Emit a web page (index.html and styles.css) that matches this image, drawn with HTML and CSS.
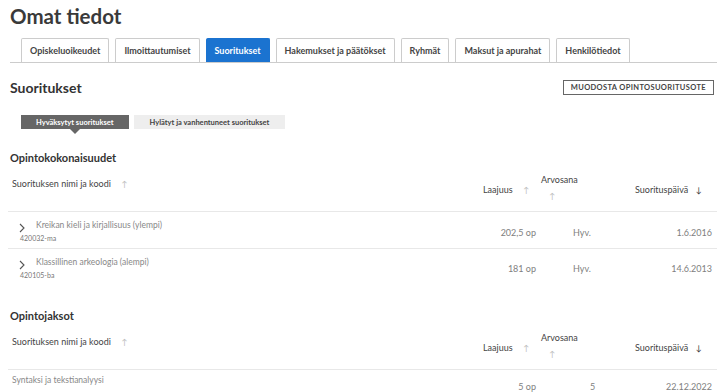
FILE: index.html
```html
<!DOCTYPE html>
<html lang="fi">
<head>
    <meta charset="UTF-8">
    <meta name="viewport" content="width=device-width, initial-scale=1.0">
    <title>Omat tiedot</title>
    <link rel="stylesheet" href="styles.css">
</head>
<body>
    <div class="page">
        <h1 class="page-title">Omat tiedot</h1>

        <nav class="tabs">
            <a href="#" class="tab">Opiskeluoikeudet</a>
            <a href="#" class="tab">Ilmoittautumiset</a>
            <a href="#" class="tab tab-active">Suoritukset</a>
            <a href="#" class="tab">Hakemukset ja päätökset</a>
            <a href="#" class="tab">Ryhmät</a>
            <a href="#" class="tab">Maksut ja apurahat</a>
            <a href="#" class="tab">Henkilötiedot</a>
        </nav>

        <div class="section-head">
            <h2>Suoritukset</h2>
            <button class="btn-outline">Muodosta opintosuoritusote</button>
        </div>

        <div class="toggle">
            <button class="toggle-btn toggle-active">Hyväksytyt suoritukset</button>
            <button class="toggle-btn">Hylätyt ja vanhentuneet suoritukset</button>
        </div>

        <!-- Opintokokonaisuudet -->
        <h3 class="group-title">Opintokokonaisuudet</h3>
        <div class="results">
            <div class="results-head">
                <div class="col-name">Suorituksen nimi ja koodi <span class="sort">↑</span></div>
                <div class="col-credits">Laajuus <span class="sort">↑</span></div>
                <div class="col-grade">Arvosana<br><span class="sort">↑</span></div>
                <div class="col-date">Suorituspäivä <span class="sort sort-on">↓</span></div>
            </div>
            <div class="results-row">
                <div class="col-name">
                    <span class="chevron">
                        <svg width="8" height="10" viewBox="0 0 8 10"><path d="M2 1 L6 5 L2 9" fill="none" stroke="#555" stroke-width="1.1"/></svg>
                    </span>
                    <div>
                        <div class="course-name">Kreikan kieli ja kirjallisuus (ylempi)</div>
                        <div class="course-code">420032-ma</div>
                    </div>
                </div>
                <div class="col-credits">202,5 op</div>
                <div class="col-grade">Hyv.</div>
                <div class="col-date">1.6.2016</div>
            </div>
            <div class="results-row">
                <div class="col-name">
                    <span class="chevron">
                        <svg width="8" height="10" viewBox="0 0 8 10"><path d="M2 1 L6 5 L2 9" fill="none" stroke="#555" stroke-width="1.1"/></svg>
                    </span>
                    <div>
                        <div class="course-name">Klassillinen arkeologia (alempi)</div>
                        <div class="course-code">420105-ba</div>
                    </div>
                </div>
                <div class="col-credits">181 op</div>
                <div class="col-grade">Hyv.</div>
                <div class="col-date">14.6.2013</div>
            </div>
        </div>

        <!-- Opintojaksot -->
        <h3 class="group-title group-second">Opintojaksot</h3>
        <div class="results">
            <div class="results-head">
                <div class="col-name">Suorituksen nimi ja koodi <span class="sort">↑</span></div>
                <div class="col-credits">Laajuus <span class="sort">↑</span></div>
                <div class="col-grade">Arvosana<br><span class="sort">↑</span></div>
                <div class="col-date">Suorituspäivä <span class="sort sort-on">↓</span></div>
            </div>
            <div class="results-row row-plain">
                <div class="col-name">
                    <div class="course-name">Syntaksi ja tekstianalyysi</div>
                </div>
                <div class="col-credits">5 op</div>
                <div class="col-grade grade-num">5</div>
                <div class="col-date">22.12.2022</div>
            </div>
        </div>
    </div>
</body>
</html>
```

FILE: styles.css
```css
:root {
    --text-color: #333;
    --muted-color: #808080;
    --line-color: #e8e8e8;
    --blue: #1b73d0;
}

* {
    box-sizing: border-box;
    margin: 0;
    padding: 0;
}

body {
    font-family: Lato, 'Noto Sans', sans-serif;
    color: var(--text-color);
    background: #fff;
}

.page {
    padding: 0 3px 0 10px;
}

.page-title {
    font-size: 20.5px;
    font-weight: 700;
    line-height: 32px;
    color: #3a3a3a;
}

/* Tabs */
.tabs {
    display: flex;
    gap: 6px;
    padding-left: 11px;
    margin-top: 6px;
    border-bottom: 1px solid #ccc;
}

.tab {
    display: block;
    height: 24px;
    line-height: 23px;
    padding: 0 8px;
    border: 1px solid #ccc;
    border-bottom: none;
    border-radius: 2px 2px 0 0;
    font-size: 9px;
    font-weight: 700;
    color: #444;
    text-decoration: none;
    background: #fff;
}

.tab-active {
    background: var(--blue);
    border-color: var(--blue);
    color: #fff;
}

/* Section heading */
.section-head {
    display: flex;
    justify-content: space-between;
    align-items: center;
    margin-top: 16px;
}

.section-head h2 {
    font-size: 14px;
    font-weight: 700;
}

.btn-outline {
    font-family: inherit;
    background: #fff;
    border: 1px solid #666;
    padding: 2px 7px;
    font-size: 7.5px;
    font-weight: 700;
    letter-spacing: 0.35px;
    text-transform: uppercase;
    color: #444;
    margin-right: 3px;
}

/* Toggle buttons */
.toggle {
    display: flex;
    gap: 5px;
    margin: 19px 0 0 11px;
}

.toggle-btn {
    font-family: inherit;
    font-size: 7.5px;
    font-weight: 700;
    border: none;
    background: #eee;
    color: #444;
    height: 14px;
    padding: 0 16px;
}

.toggle-active {
    position: relative;
    background: #666;
    color: #fff;
    padding: 0 15px;
}

.toggle-active::after {
    content: '';
    position: absolute;
    left: 50%;
    bottom: -5px;
    margin-left: -5px;
    border-left: 5px solid transparent;
    border-right: 5px solid transparent;
    border-top: 5px solid #666;
}

/* Result tables */
.group-title {
    font-size: 11px;
    font-weight: 700;
    margin-top: 22px;
}

.group-second {
    margin-top: 25px;
}

.results {
    margin-left: -2px;
    font-size: 9px;
}

.results-head,
.results-row {
    display: grid;
    grid-template-columns: 1fr 65px 80px 97px;
}

.results-head {
    height: 48px;
    align-items: center;
    color: #444;
    border-bottom: 1px solid var(--line-color);
}

.results-head > div {
    padding-top: 4px;
}

.results-head .col-name {
    align-self: start;
    padding: 14px 0 0 4px;
}

.results-head .col-credits {
    padding-left: 8px;
}

.results-head .col-grade {
    line-height: 16px;
    padding: 0 0 0 1px;
}

.results-head .col-date {
    padding-left: 15px;
}

.sort {
    color: #bbb;
    font-size: 8px;
    margin-left: 8px;
}

.sort-on {
    color: #333;
    margin-left: 5px;
}

.results-row {
    align-items: center;
    color: var(--muted-color);
    min-height: 36px;
}

.results-row + .results-row {
    border-top: 1px solid var(--line-color);
}

.results-row .col-name {
    display: flex;
    align-items: flex-start;
    padding: 6px 0 4px 0;
}

.results-row .col-credits {
    text-align: right;
    padding-right: 4px;
    padding-top: 4px;
}

.results-row .col-grade {
    padding-left: 33px;
    padding-top: 4px;
}

.results-row .col-date {
    text-align: right;
    padding-right: 5px;
    padding-top: 4px;
}

.chevron {
    display: block;
    width: 18px;
    padding: 3px 0 0 10px;
}

.course-name {
    font-size: 8.5px;
    padding-left: 10px;
    color: #888;
}

.course-code {
    font-size: 7px;
    margin: 4px 0 0 -6px;
    color: #777;
}

.row-plain {
    align-items: start;
}

.row-plain .col-name {
    padding: 5px 0 0 4px;
}

.row-plain .course-name {
    padding-left: 0;
}

.row-plain .col-credits,
.row-plain .col-grade,
.row-plain .col-date {
    padding-top: 11px;
}

.row-plain .grade-num {
    padding-left: 50px;
}
```
